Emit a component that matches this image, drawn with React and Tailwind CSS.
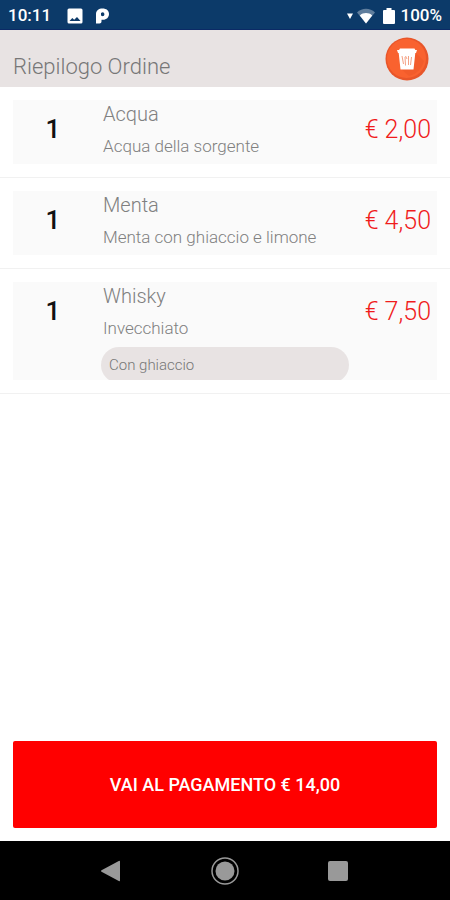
import React from "react";

const items = [
  { id: 1, qty: 1, name: "Acqua", description: "Acqua della sorgente", price: 2 },
  { id: 2, qty: 1, name: "Menta", description: "Menta con ghiaccio e limone", price: 4.5 },
  { id: 3, qty: 1, name: "Whisky", description: "Invecchiato", price: 7.5, note: "Con ghiaccio" },
];

const formatPrice = (value) => "€ " + value.toFixed(2).replace(".", ",");

const StatusBar = () => (
  <div className="flex h-[30px] items-center justify-between border-b border-[#0b2a66] bg-[#0c3a69] px-2 pt-[2px] text-[17px] font-medium text-white">
    <div className="flex items-center">
      <span className="w-[59px]">10:11</span>
      <svg className="h-4 w-4" viewBox="0 0 16 16" fill="currentColor">
        <path
          fillRule="evenodd"
          d="M2 .5h12A1.500 1.500 0 0 1 15.500 2v12a1.500 1.500 0 0 1-1.500 1.500H2A1.500 1.500 0 0 1 .5 14V2A1.500 1.500 0 0 1 2 .5zM2.500 13h11L10 9l-2.800 2.700L5.300 10z"
        />
      </svg>
      <svg className="ml-3 h-4 w-4" viewBox="0 0 16 16" fill="currentColor">
        <path
          fillRule="evenodd"
          d="M1 15.500V6C1 2.500 3.800.5 7.500.5c4 0 6.500 2.200 6.500 5.500s-2.500 5.800-6 5.800H6.500v1.700c0 1.300-.8 2-2 2zM7.500 4.300L6 5v2.500l1.500.7a1.900 1.900 0 0 0 0-3.900z"
        />
      </svg>
    </div>
    <div className="flex items-center">
      <svg className="h-[6px] w-[6px]" viewBox="0 0 6 6" fill="currentColor">
        <path d="M0 .5h6L3 6z" />
      </svg>
      <svg className="ml-1 h-4 w-[18px]" viewBox="0 0 18 16" fill="currentColor">
        <path fillOpacity="0.35" d="M0 4.500C5-.5 13-.5 18 4.500L9 15.500z" />
        <path d="M2.800 7.500c3.500-3.200 8.900-3.200 12.400 0L9 15.500z" />
      </svg>
      <svg className="ml-2 h-4 w-3" viewBox="0 0 12 16" fill="currentColor">
        <path d="M3.500 0h5v2H11a1 1 0 0 1 1 1v12a1 1 0 0 1-1 1H1a1 1 0 0 1-1-1V3a1 1 0 0 1 1-1h2.500z" />
      </svg>
      <span className="ml-[5px]">100%</span>
    </div>
  </div>
);

const Header = () => (
  <header className="flex h-[57px] items-center justify-between bg-[#e8e3e3] pl-[13px] pr-[21px]">
    <h1 className="pt-4 text-[22px] leading-7 font-light text-[#777]">Riepilogo Ordine</h1>
    <button type="button" aria-label="Svuota ordine" className="h-11 w-11 rounded-full">
      <svg className="h-11 w-11" viewBox="0 0 44 44">
        <circle cx="22" cy="22" r="21.500" fill="#e8562a" />
        <circle cx="21.500" cy="21.500" r="19.500" fill="#f9622f" />
        <path d="M30 15l9 9a20 20 0 0 1-15 15l-8-7z" fill="#f25c2b" />
        <path
          d="M15 11.500h14.500l.8 1.500h1.700l-1 3h-.7L28.500 32.500h-13L13.700 16H13l-1-3h2z"
          fill="#fff"
        />
        <path
          d="M17 19l1.500 8M20 20l.5 8.500M23.500 19v9M26.500 20l-1 8M20.500 19l1.500 3"
          stroke="#f4a184"
          strokeWidth="1"
          fill="none"
        />
      </svg>
    </button>
  </header>
);

const OrderItem = ({ item }) => (
  <li className="border-b border-[#f1f1f1] p-[13px]">
    <div className="grid grid-cols-[88px_1fr_88px] overflow-hidden bg-[#fafafa]">
      <span className="pr-2 text-center text-[26px] leading-[58px] font-medium text-[#111]">
        {item.qty}
      </span>
      <div>
        <h2 className="pl-[2px] text-xl leading-7 font-light text-[#808080]">{item.name}</h2>
        <p className="pl-[2px] text-[17px] leading-9 font-light text-[#808080]">
          {item.description}
        </p>
        {item.note && (
          <div className="mt-px h-[33px] overflow-hidden">
            <p className="rounded-[18px] bg-[#e8e3e3] px-2 text-[15px] leading-9 font-light text-[#777]">
              {item.note}
            </p>
          </div>
        )}
      </div>
      <span className="pr-[6px] text-right text-[25px] leading-[60px] font-light whitespace-nowrap text-[#f01c1c]">
        {formatPrice(item.price)}
      </span>
    </div>
  </li>
);

const NavBar = () => (
  <nav className="flex h-[59px] items-center justify-center gap-[88px] bg-black text-[#999]">
    <button type="button" aria-label="Indietro">
      <svg className="h-6 w-6" viewBox="0 0 24 24" fill="currentColor">
        <path d="M21 2.500v19a.8.8 0 0 1-1.200.6L2.500 12.700a.8.8 0 0 1 0-1.400L19.800 1.900a.8.8 0 0 1 1.200.6z" />
      </svg>
    </button>
    <button type="button" aria-label="Home">
      <svg className="h-7 w-7" viewBox="0 0 28 28">
        <circle cx="14" cy="14" r="13" fill="none" stroke="currentColor" strokeWidth="1.500" />
        <circle cx="14" cy="14" r="9.500" fill="currentColor" />
      </svg>
    </button>
    <button type="button" aria-label="Recenti">
      <svg className="h-6 w-6" viewBox="0 0 24 24" fill="currentColor">
        <rect x="1" y="2" width="20" height="20" rx="2" />
      </svg>
    </button>
  </nav>
);

const App = () => {
  const total = items.reduce((sum, item) => sum + item.qty * item.price, 0);

  return (
    <div className="flex min-h-screen flex-col bg-white font-[Roboto,sans-serif]">
      <StatusBar />
      <Header />
      <main className="flex flex-1 flex-col">
        <ul className="flex-1">
          {items.map((item) => (
            <OrderItem key={item.id} item={item} />
          ))}
        </ul>
        <div className="p-[13px]">
          <button
            type="button"
            className="h-[87px] w-full rounded-xs bg-[#ff0000] text-lg font-medium text-white">
            VAI AL PAGAMENTO {formatPrice(total)}
          </button>
        </div>
      </main>
      <NavBar />
    </div>
  );
};

export default App;
